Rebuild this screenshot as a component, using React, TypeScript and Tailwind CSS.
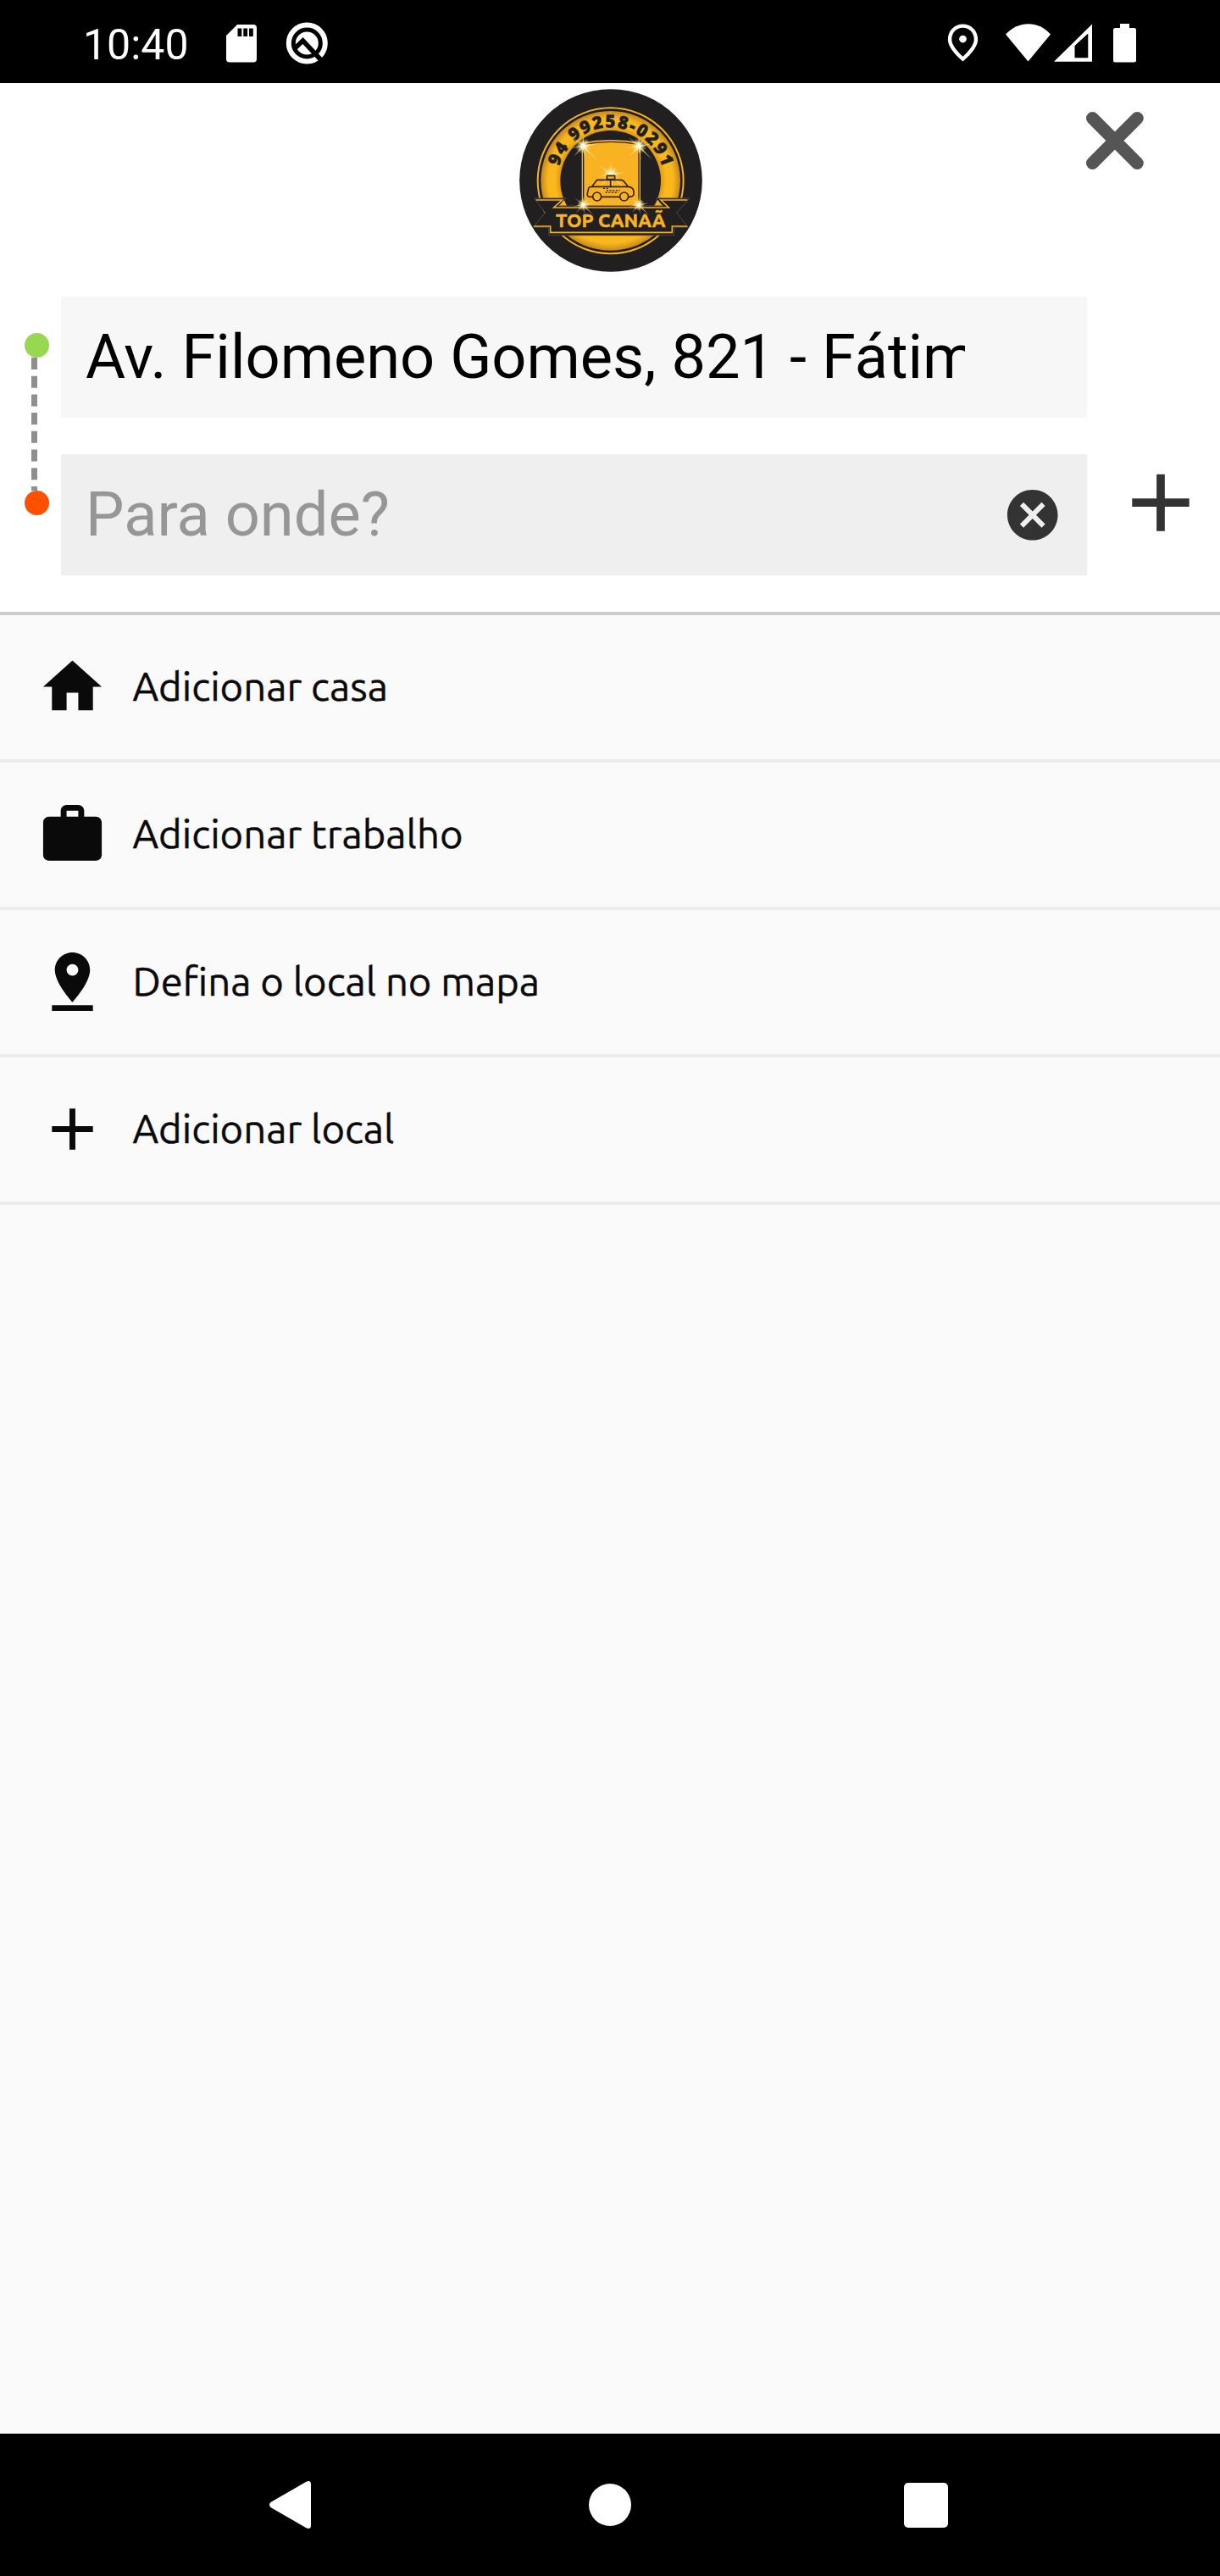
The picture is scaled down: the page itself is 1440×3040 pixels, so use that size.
import React from 'react';
import { MdAdd, MdCancel, MdHome, MdOutlinePlace, MdPinDrop, MdWork } from 'react-icons/md';
import type { IconType } from 'react-icons';

interface PlaceOption {
  label: string;
  icon: IconType;
}

const PLACE_OPTIONS: PlaceOption[] = [
  { label: 'Adicionar casa', icon: MdHome },
  { label: 'Adicionar trabalho', icon: MdWork },
  { label: 'Defina o local no mapa', icon: MdPinDrop },
  { label: 'Adicionar local', icon: MdAdd },
];

const SPARKLES = [
  { x: 265, y: 232, size: 1.1 },
  { x: 462, y: 232, size: 1.1 },
  { x: 363, y: 333, size: 1.2 },
  { x: 265, y: 440, size: 0.85 },
  { x: 462, y: 440, size: 0.85 },
];

const StatusBar: React.FC = () => (
  <div className="flex h-[98px] items-start bg-black pl-[98px] text-white">
    <span className="mt-[23px] w-[169px] text-[50px] leading-[60px]">10:40</span>
    <svg className="mt-[29px] h-[45px] w-[36px]" viewBox="0 0 36 45">
      <path
        fill="currentColor"
        fillRule="evenodd"
        d="M13 0H32a4 4 0 0 1 4 4V40.500a4 4 0 0 1-4 4H4a4 4 0 0 1-4-4V13zM13.500 4.500v9.500h4.800V4.500zM20.300 4.500v9.500h4.800V4.500zM27 4.500v9.500h4.800V4.500z"
      />
    </svg>
    <svg className="mt-[26px] ml-[34px] h-[50px] w-[50px]" viewBox="0 0 50 50">
      <circle cx="25.300" cy="25" r="21.500" fill="none" stroke="currentColor" strokeWidth="6" />
      <circle cx="25.300" cy="25" r="13.500" fill="currentColor" />
      <path d="M11 31L20.500 22L43 46" fill="none" stroke="#000" strokeWidth="5.500" />
    </svg>
    <MdOutlinePlace className="mt-[24px] ml-[723px] h-[53px] w-[53px]" />
    <svg className="mt-[28px] ml-[24px] h-[45px] w-[54px]" viewBox="0 0 54 45">
      <path fill="currentColor" d="M0 12.500C15-4 39-4 53 12.500L26.500 44.500z" />
    </svg>
    <svg className="mt-[28px] ml-[3px] h-[45px] w-[45px]" viewBox="0 0 45 45">
      <path fill="currentColor" fillRule="evenodd" d="M0 44.700L45 .5V44.700zM24.500 26V40.300H40.300V11.500z" />
    </svg>
    <svg className="mt-[28px] ml-[25px] h-[46px] w-[27px]" viewBox="0 0 27 46">
      <path
        fill="currentColor"
        d="M8 0H19V5H24.500a2.500 2.500 0 0 1 2.500 2.500V43a2.500 2.500 0 0 1-2.500 2.500H2.500A2.500 2.500 0 0 1 0 43V7.500A2.500 2.500 0 0 1 2.500 5H8z"
      />
    </svg>
  </div>
);

const Sparkle: React.FC<{ x: number; y: number; size: number }> = ({ x, y, size }) => (
  <g transform={`translate(${x} ${y}) scale(${size})`}>
    <circle r="26" fill="url(#glow)" />
    <path
      fill="#fff3c4"
      fillOpacity="0.75"
      d="M0-38L2-5L16-22L5-2L42-8L5 3L44 44L1 6L8 46L-2 6L-30 34L-5 2L-42 8L-5-2L-34-28L-2-5z"
    />
    <circle r="7" fill="#fffdf0" />
  </g>
);

const Logo: React.FC = () => (
  <svg className="h-[216px] w-[216px]" viewBox="39 30 648 648">
    <defs>
      <radialGradient id="ring" gradientUnits="userSpaceOnUse" cx="362" cy="355" r="246">
        <stop offset="0.7" stopColor="#d88d12" />
        <stop offset="0.8" stopColor="#fbb81c" />
        <stop offset="0.9" stopColor="#f9b71f" />
        <stop offset="1" stopColor="#c98a1c" />
      </radialGradient>
      <radialGradient id="glow">
        <stop offset="0" stopColor="#fff" />
        <stop offset="0.35" stopColor="#fff2b8" stopOpacity="0.8" />
        <stop offset="1" stopColor="#fdc93c" stopOpacity="0" />
      </radialGradient>
      <path id="phoneArc" d="M173 355A189 189 0 0 1 551 355" />
    </defs>
    <circle cx="363" cy="354" r="323.500" fill="#211f20" />
    <circle cx="362" cy="355" r="258" fill="none" stroke="#f8b420" strokeWidth="6" />
    <circle cx="362" cy="355" r="247" fill="url(#ring)" />
    <circle cx="362" cy="355" r="178" fill="#211f20" />
    <text
      fontFamily="Open Sans"
      fontWeight="800"
      fontSize="62"
      letterSpacing="4.800"
      fill="#211f20"
      stroke="#211f20"
      strokeWidth="1.500"
      textAnchor="middle"
    >
      <textPath href="#phoneArc" startOffset="50.500%">
        94 99258-0291
      </textPath>
    </text>
    <path d="M260 220Q363 200 468 220V450H260z" fill="#f8b420" />
    <path d="M266 226Q363 208 462 226V450H266z" fill="#f9b322" stroke="#211f20" strokeWidth="4" />
    {SPARKLES.slice(0, 3).map((s) => (
      <Sparkle key={`${s.x}-${s.y}`} {...s} />
    ))}
    {/* taxi */}
    <g fill="none" stroke="#33230c" strokeWidth="5" strokeLinejoin="round">
      <path d="M298 412H288Q278 412 280 400L284 382Q286 376 296 376L314 352H400Q408 352 424 376Q442 377 444 392V402Q444 412 426 412M330 412H394M296 376H424M362 352V376" />
      <path d="M349 350V337H377V350z" fill="#f9b322" />
      <circle cx="314" cy="411" r="15" />
      <circle cx="410" cy="411" r="15" />
      <path d="M336 382H356M348 389H396M344 396H390" strokeDasharray="6 5" strokeWidth="4" />
    </g>
    {/* ribbon */}
    <path
      d="M92 417H205L178 444H548L522 417H642L596 468L636 520H587V548H143V520H88L130 468z"
      fill="#211f20"
      stroke="#4a4947"
      strokeWidth="3"
    />
    <path d="M184 441L196 423L205 441zM541 441L530 423L521 441z" fill="#f9b322" />
    <path
      d="M98 423H190L161 450H568L540 423H634M90 516H149V538H580V516H634"
      fill="none"
      stroke="#f5b122"
      strokeWidth="5"
    />
    {SPARKLES.slice(3).map((s) => (
      <Sparkle key={`${s.x}-${s.y}`} {...s} />
    ))}
    <text
      x="168"
      y="518"
      textLength="388"
      lengthAdjust="spacingAndGlyphs"
      fontFamily="Ubuntu"
      fontWeight="700"
      fontSize="64"
      fill="#f9b322"
      stroke="#f9b322"
      strokeWidth="1.500"
    >
      TOP CANAÃ
    </text>
  </svg>
);

const RouteMarkers: React.FC = () => (
  <div className="flex w-[72px] flex-col items-center pt-[43px] pl-[15px]">
    <div className="h-[29px] w-[29px] rounded-full bg-[#97d850]" />
    <svg className="mr-[6px] h-[157px] w-[7px]" viewBox="0 0 7 157">
      <path d="M3.500 0V157" stroke="#8f8f8f" strokeWidth="7" strokeDasharray="14 7.700" />
    </svg>
    <div className="h-[29px] w-[29px] rounded-full bg-[#ff5000]" />
  </div>
);

const RouteForm: React.FC = () => (
  <div className="flex h-[372px]">
    <RouteMarkers />
    <div className="flex w-[1211px] flex-col gap-[43px] text-[72.2px] leading-[86px]">
      <div className="flex h-[143px] items-center bg-[#f7f7f7] pl-[29px]">
        <span className="w-[1038px] overflow-hidden whitespace-nowrap text-black">
          Av. Filomeno Gomes, 821 - Fátim
        </span>
      </div>
      <div className="flex h-[143px] items-center justify-between bg-[#efefef] pr-[29px] pl-[29px]">
        <span className="text-[#969696]">Para onde?</span>
        <MdCancel className="h-[71.5px] w-[71.5px] text-[#333333]" />
      </div>
    </div>
    <button type="button" aria-label="Adicionar parada" className="mt-[209px] ml-[53px] h-[68px] w-[68px]">
      <svg viewBox="0 0 68 68" className="h-full w-full">
        <path d="M34 .7V67.700M.3 34.200H67.700" stroke="#333333" strokeWidth="9.700" />
      </svg>
    </button>
  </div>
);

const PlaceList: React.FC = () => (
  <ul className="flex-1 bg-[#fafafa]">
    {PLACE_OPTIONS.map(({ label, icon: Icon }) => (
      <li
        key={label}
        className="flex h-[174px] items-center gap-[30px] border-b-4 border-[#ececec] pl-[43.5px] text-[#0a0a0a]"
      >
        <Icon className="mb-px h-[83px] w-[83px]" />
        <span className="pb-[2px] font-['Ubuntu','Noto_Sans',sans-serif] text-[47.2px] leading-[60px] whitespace-nowrap [-webkit-text-stroke:0.4px_#0a0a0a]">
          {label}
        </span>
      </li>
    ))}
  </ul>
);

const NavigationBar: React.FC = () => (
  <div className="flex h-[168px] items-center bg-black pl-[318px]">
    <svg className="h-[56px] w-[49px]" viewBox="0 0 49 56">
      <path fill="#fff" d="M1.500 25L43 1Q49-2 49 4V52Q49 58 43 55L1.500 31Q-1.500 28 1.500 25z" />
    </svg>
    <div className="ml-[328px] h-[50px] w-[50px] rounded-full bg-white" />
    <div className="ml-[322px] h-[53px] w-[52px] rounded-[5px] bg-white" />
  </div>
);

const App: React.FC = () => (
  <div className="flex h-[3040px] w-[1440px] flex-col overflow-hidden bg-white font-[Roboto,sans-serif]">
    <StatusBar />
    <div className="border-b-4 border-[#cbcbcb] bg-white">
      <div className="flex h-[252px] items-start pt-[7px] pl-[613px]">
        <Logo />
        <button type="button" aria-label="Fechar" className="mt-[27px] ml-[453px] h-[68px] w-[68px]">
          <svg viewBox="0 0 68 68" className="h-full w-full">
            <path
              d="M7.500 7.500L60.300 60.500M60.300 7.500L7.500 60.500"
              stroke="#555555"
              strokeWidth="15"
              strokeLinecap="round"
            />
          </svg>
        </button>
      </div>
      <RouteForm />
    </div>
    <PlaceList />
    <NavigationBar />
  </div>
);

export default App;
